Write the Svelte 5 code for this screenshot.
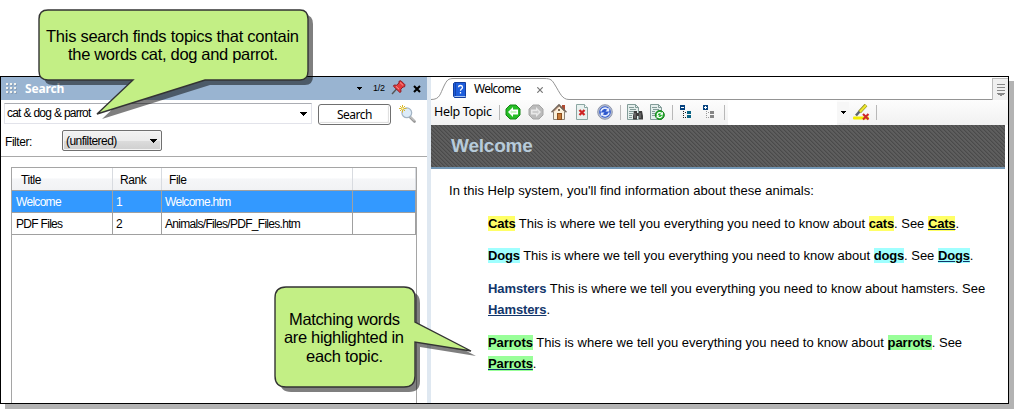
<script>
  const rows = [
    { title: 'Welcome', rank: 1, file: 'Welcome.htm', selected: true },
    { title: 'PDF Files', rank: 2, file: 'Animals/Files/PDF_Files.htm', selected: false }
  ];
  const dots = [0, 4, 8];
</script>

<div class="stage">
  <div class="window">
    <section class="search">
      <header class="titlebar">
        <svg class="grip" width="11" height="11" shape-rendering="crispEdges">
          {#each dots as y}{#each dots as x}
            <rect x={x + 1} y={y + 1} width="2" height="2" fill="#8aa1ba" />
            <rect {x} {y} width="2" height="2" fill="#f2f2ee" />
          {/each}{/each}
        </svg>
        <span class="name">Search</span>
        <svg class="down" width="6" height="3" shape-rendering="crispEdges"><path d="M0 0h6L3 3z" /></svg>
        <span class="count">1/2</span>
        <svg class="pin" width="15" height="15" viewBox="0 0 15 15">
          <path d="M1 14L6 8.5" stroke="#555" stroke-width="1.4" />
          <path d="M8 1.2L10 .8l4 4-.4 2-1.6.2-2.2 2.2.2 2.6-1.2.6L2.4 6.2l.8-1.2 2.4.2L8 3z" fill="#e23a3d" stroke="#8f1d25" />
          <path d="M9 2.5l3.2 3M5 6.4l3 2.8" stroke="#ff9a95" />
        </svg>
        <svg class="close" width="8" height="8"><path d="M1 1l6 6M7 1L1 7" stroke="#000" stroke-width="2.1" /></svg>
      </header>

      <div class="query">
        <div class="combo">
          <span>cat &amp; dog &amp; parrot</span>
          <svg width="7" height="4" shape-rendering="crispEdges"><path d="M0 0h7L3.5 4z" /></svg>
        </div>
        <button class="go"><span>Search</span></button>
        <svg class="lens" width="17" height="18" viewBox="0 0 17 18">
          <path d="M10.5 11.5l5 5" stroke="#999" stroke-width="2.6" stroke-linecap="round" />
          <path d="M11 11.5l4.3 4.3" stroke="#ddd" stroke-width="1" />
          <circle cx="7.8" cy="7.8" r="4.9" fill="#dcebf8" stroke="#a3b4c4" stroke-width="1.2" />
          <path d="M3.5 0v7.500M0 3.500h7.500M1 1l5 5M6 1L1 6" stroke="#d9b72c" />
          <rect x="2.500" y="2.500" width="2" height="2" fill="#fff9c0" />
        </svg>
      </div>

      <div class="filter">
        <label for="filter">Filter:</label>
        <button id="filter" class="select">
          <span>(unfiltered)</span>
          <svg width="7" height="4" shape-rendering="crispEdges"><path d="M0 0h7L3.5 4z" /></svg>
        </button>
      </div>

      <div class="results">
        <div class="grid head">
          <span>Title</span><span>Rank</span><span>File</span><span></span>
        </div>
        {#each rows as row}
          <div class="grid row" class:selected={row.selected}>
            <span>{row.title}</span><span>{row.rank}</span><span>{row.file}</span><span></span>
          </div>
        {/each}
      </div>
    </section>

    <div class="splitter"></div>

    <section class="topic">
      <div class="tabs">
        <div class="tabarea">
          <svg class="tabshape" width="574" height="23" viewBox="0 0 574 23" fill="none">
            <path d="M0 22.500C9 22.500 9 17 13 9C16 3 17 1.500 23 1.500H113C120 1.500 121 3 124 8C129 16 131 22.500 138 22.500H574" stroke="#949494" />
          </svg>
          <div class="tab">
            <svg width="13" height="16" viewBox="0 0 13 16">
              <path d="M1.500.5h11v15h-11L.5 14V1.500z" fill="#1e5edc" stroke="#123c9c" />
              <path d="M2.500 1v14" stroke="#1644ad" />
              <path d="M1.500 14.500h11" stroke="#a9c6f4" />
              <path d="M5.500 5.200Q5.600 3.500 7.500 3.500T9.500 5.200Q9.500 6.400 8.200 7.200Q7.500 7.800 7.500 8.800M7.500 10v1.500" fill="none" stroke="#fff" stroke-width="1.300" />
            </svg>
            <span>Welcome</span>
            <svg class="x" width="6" height="6"><path d="M.3.3l5.400 5.400M5.700.3L.3 5.700" stroke="#777" stroke-width="1.200" /></svg>
          </div>
        </div>
        <div class="menu">
          <svg width="8" height="12" shape-rendering="crispEdges"><path d="M0 0h8v1H0zM0 3h8v1H0zM0 6h8v1H0zM0 9h8v1H7v1H5v1H3v-1H1v-1H0z" fill="#888" /></svg>
        </div>
      </div>

      <div class="toolbar">
        <span class="label">Help Topic</span>
        <i class="sep"></i>
        <div class="tools nav">
          <svg width="16" height="16" viewBox="0 0 16 16">
            <path d="M5 1h6l4 4v6l-4 4H5l-4-4V5z" fill="#25bd25" stroke="#168616" />
            <path d="M8 3L3 8l5 5v-2.500h5v-5H8z" fill="#fff" />
            <path d="M7 6L5 8l2 2V9h4.500V7H7z" fill="#c8f3c3" />
          </svg>
          <svg width="16" height="16" viewBox="0 0 16 16">
            <path d="M5 1h6l4 4v6l-4 4H5l-4-4V5z" fill="#bbb" stroke="#a4a4a4" />
            <path d="M8 3l5 5-5 5v-2.500H3v-5h5z" fill="#e8e8e8" />
            <path d="M9 6l2 2-2 2V9H4.500V7H9z" fill="#ccc" />
          </svg>
          <svg width="16" height="16" viewBox="0 0 16 16">
            <path d="M11 1h3v5h-3z" fill="#b04a32" />
            <path d="M2.500 7.500L8 2l5.500 5.500v8h-11z" fill="#fbf0da" stroke="#8b8174" />
            <path d="M.5 8.200L8 .8l7.500 7.400" fill="none" stroke="#75675b" stroke-width="1.500" />
            <path d="M8 2.500L3 7.500" stroke="#d7a58a" />
            <rect x="6.500" y="9.500" width="4" height="6" fill="#c77a37" stroke="#8b4e1c" />
            <rect x="7" y="5" width="2" height="2" fill="#806b58" />
          </svg>
          <svg width="16" height="16" viewBox="0 0 16 16">
            <path d="M2.500.5h8l3 3v12h-11z" fill="#e8f1ef" stroke="#8ba6a2" />
            <path d="M10.500.5v3h3" fill="#fff" stroke="#8ba6a2" />
            <path d="M5.500 6l5 5M10.500 6l-5 5" stroke="#cf2525" stroke-width="2.300" />
          </svg>
          <svg width="16" height="16" viewBox="0 0 16 16">
            <circle cx="8" cy="8" r="7.300" fill="#b6bfd4" stroke="#8e96aa" />
            <circle cx="8" cy="8" r="5.800" fill="#2e58cd" />
            <path d="M4 7.500C4.500 4 9 3 11 5.500M12 8.500C11.500 12 7 13 5 10.500" fill="none" stroke="#e5edff" stroke-width="1.600" />
            <path d="M12.300 3.500v4H8.500zM3.700 12.500v-4h3.800z" fill="#e5edff" />
          </svg>
        </div>
        <i class="sep"></i>
        <div class="tools docs">
          <svg width="16" height="16" viewBox="0 0 16 16">
            <path d="M.5.5h8l3 3v12H.5z" fill="#e4eeec" stroke="#829c98" />
            <path d="M8.500.5v3h3M2 3.500h5M3 5.500h6M2 7.500h5M2 9.500h4M2 11.500h3M2 13.500h3" fill="none" stroke="#829c98" />
            <path d="M7 7h3v2h2V7h3l1 5v3.500h-4V12h-2v3.500H6V12z" fill="#3f3f3f" />
            <path d="M8 9v5M13 9v5" stroke="#888" />
          </svg>
          <svg width="16" height="16" viewBox="0 0 16 16">
            <path d="M.5.5h8l3 3v12H.5z" fill="#e4eeec" stroke="#829c98" />
            <path d="M8.500.5v3h3M2 3.500h5M3 5.500h6M2 7.500h3M2 9.500h3M2 11.500h3" fill="none" stroke="#829c98" />
            <circle cx="9.800" cy="11" r="4.500" fill="#23ad2c" stroke="#148019" />
            <path d="M7.300 11c0-3 4-3.200 5-.8M12.300 11.500c-.5 2.500-4 2.800-5 .5" fill="none" stroke="#fff" stroke-width="1.200" />
            <path d="M12.900 7.800v3h-3zM6.700 14.200v-3h3z" fill="#fff" />
          </svg>
        </div>
        <i class="sep"></i>
        <div class="tools trees">
          <svg width="16" height="16" shape-rendering="crispEdges">
            <path d="M2 1h5v5H2z" fill="#06427f" /><path d="M3 3h3v1H3z" fill="#fff" />
            <path d="M5 7h1v1H5zM5 9h1v1H5zM5 11h1v1H5zM5 13h1v1H5zM7 8h1v1H7zM7 13h1v1H7z" fill="#222" />
            <path d="M9 7h4v3H9zM9 11h4v3H9z" fill="#0a6484" />
          </svg>
          <svg width="16" height="16" shape-rendering="crispEdges">
            <path d="M2 1h5v5H2z" fill="#06427f" /><path d="M3 3h3v1H3zM4 2h1v3H4z" fill="#fff" />
            <path d="M5 7h1v1H5zM5 9h1v1H5zM5 11h1v1H5zM5 13h1v1H5zM7 8h1v1H7zM7 13h1v1H7z" fill="#999" />
            <path d="M9 7h4v3H9zM9 11h4v3H9z" fill="#858585" />
          </svg>
        </div>
        <i class="sep"></i>
        <div class="quick"></div>
        <div class="drop"><svg width="5" height="3" shape-rendering="crispEdges"><path d="M0 0h5L2.500 3z" /></svg></div>
        <svg class="marker" width="17" height="17" viewBox="0 0 17 17">
          <rect y="12.500" width="16" height="3" rx="1" fill="#f4ee00" />
          <path d="M13 1L6.500 8" stroke="#8e8c24" stroke-width="3.600" />
          <path d="M13 1.200L6.500 8.200" stroke="#eee72d" stroke-width="2.200" />
          <path d="M6.500 7.500L3 11.500" stroke="#5d6570" stroke-width="2.600" />
          <path d="M10 10l5.500 5.500M15.500 10L10 15.500" stroke="#cf2929" stroke-width="2.100" />
        </svg>
        <i class="sep"></i>
      </div>

      <div class="banner"><h1>Welcome</h1></div>

      <article>
        <p class="intro">In this Help system, you'll find information about these animals:</p>
        <p class="l1"><b class="cat">Cats</b> This is where we tell you everything you need to know about <b class="cat">cats</b>. See <b class="cat link">Cats</b>.</p>
        <p class="l2"><b class="dog">Dogs</b> This is where we tell you everything you need to know about <b class="dog">dogs</b>. See <b class="dog link">Dogs</b>.</p>
        <p class="l3"><b class="ham">Hamsters</b> This is where we tell you everything you need to know about hamsters. See<br /><b class="ham link">Hamsters</b>.</p>
        <p class="l4"><b class="bird">Parrots</b> This is where we tell you everything you need to know about <b class="bird">parrots</b>. See<br /><b class="bird link">Parrots</b>.</p>
      </article>
    </section>
  </div>

  <svg class="callouts" width="1014" height="409" viewBox="0 0 1014 409">
    <g class="shade" transform="translate(5 5)">
      <path d="M48 10H300Q308 10 308 19V71Q308 80 300 80H205L97 114L133 80H48Q39 80 39 71V19Q39 10 48 10Z" />
      <path d="M286 287H404Q415 287 415 298V322L471 351L415 342V376Q415 387 404 387H286Q275 387 275 376V298Q275 287 286 287Z" />
    </g>
    <g class="bubble">
      <path d="M48 10H300Q308 10 308 19V71Q308 80 300 80H205L97 114L133 80H48Q39 80 39 71V19Q39 10 48 10Z" />
      <path d="M286 287H404Q415 287 415 298V322L471 351L415 342V376Q415 387 404 387H286Q275 387 275 376V298Q275 287 286 287Z" />
    </g>
    <g class="say">
      <text x="46" y="42" textLength="253">This search finds topics that contain</text>
      <text x="68" y="60" textLength="210">the words cat, dog and parrot.</text>
      <text x="289" y="325" textLength="111">Matching words</text>
      <text x="284" y="343" textLength="120">are highlighted in</text>
      <text x="306" y="362" textLength="77">each topic.</text>
    </g>
  </svg>
</div>

<style>
  :global(body) { background: #fff; overflow: hidden; }
  .stage { position: relative; width: 1014px; height: 409px; padding-top: 76px; box-sizing: border-box; font-family: "Liberation Sans", Arial, sans-serif; color: #000; background: #fff; overflow: hidden; }
  .stage * { box-sizing: border-box; }
  svg { flex: none; }
  span, p, h1, label { white-space: nowrap; }
  .window { width: 1009px; height: 328px; border: 1px solid #000; box-shadow: 5px 5px 0 #b3b3b3; display: flex; background: #fff; }

  .search { width: 426px; display: flex; flex-direction: column; }
  .titlebar { height: 23px; background: #99b4d1; display: flex; align-items: center; padding-left: 5px; }
  .name { margin-left: 8px; width: 332px; font: bold 12px "Noto Sans", sans-serif; letter-spacing: -.15px; color: #fff; line-height: 20px; }
  .down { margin: 0 1px 0 -1px; }
  .count { width: 12px; margin-left: 10px; font-size: 9px; letter-spacing: -.2px; line-height: 20px; margin-top: -2px; }
  .pin { margin: -3px 0 0 6px; }
  .close { margin-left: 7px; }

  .query { display: flex; height: 28px; padding: 3px 0 0 3px; align-items: flex-start; }
  .combo { width: 308px; height: 21px; border: 1px solid #e2e3ea; border-top-color: #abadb3; display: flex; align-items: center; justify-content: space-between; padding: 0 4px 0 2px; font-size: 12px; }
  .combo span { letter-spacing: -.8px; word-spacing: .3px; margin-top: -2px; }
  .go { margin: 1px 0 0 6px; padding: 0; width: 73px; height: 21px; border: 1px solid #707070; border-radius: 3px; background: #fff; box-shadow: inset 0 0 0 1px #fff, inset -1px -1px 1px 1px #ddd; font: 12px "Noto Sans", sans-serif; line-height: 19px; color: #000; }
  .go span { letter-spacing: -.5px; }
  .lens { margin: 2px 0 0 8px; }

  .filter { height: 29px; display: flex; border-bottom: 1px solid #a9a9a9; padding: 2px 0 0 4px; }
  .filter label { width: 57px; font-size: 12px; letter-spacing: -.45px; line-height: 24px; }
  .select { width: 100px; height: 21px; border: 1px solid #707070; border-radius: 2px; background: linear-gradient(#f2f2f2, #ebebeb 50%, #dcdcdc 51%, #cfcfcf); box-shadow: inset 0 0 0 1px #f5f5f5; padding: 0 4px 0 3px; font: 12px "Liberation Sans", sans-serif; color: #000; display: flex; align-items: center; justify-content: space-between; }
  .select span { letter-spacing: -.55px; }

  .results { margin: 10px 10px 0 10px; flex: 1; border: 1px solid #a5a5a5; border-bottom: 0; font-size: 12px; }
  .grid { display: grid; grid-template-columns: 101px 49px 191px 63px; grid-template-rows: 100%; height: 22px; border-bottom: 1px solid #a0a0a0; line-height: 22px; }
  .grid span { padding-left: 3px; border-right: 1px solid #a0a0a0; letter-spacing: -.7px; }
  .grid span:first-child { padding-left: 4px; }
  .grid.head { height: 23px; background: linear-gradient(#fff 45%, #f5f6f8 50%, #f1f2f4); line-height: 24px; }
  .grid.head span { border-color: #d8dbe0; padding-left: 7px; letter-spacing: -.45px; }
  .grid.head span:first-child { padding-left: 9px; }
  .row.selected { background: #3399ff; color: #fff; }

  .splitter { width: 4px; background: #dfe8f1; }
  .topic { width: 577px; display: flex; flex-direction: column; }
  .tabs { height: 23px; display: flex; }
  .tabarea { flex: 1; overflow: hidden; display: grid; }
  .tabshape, .tab { grid-area: 1 / 1; }
  .tab { display: flex; align-items: center; padding: 2px 0 0 22px; }
  .tab span { font: 12px "Noto Sans", sans-serif; margin-left: 8px; width: 63px; line-height: 18px; letter-spacing: -.75px; margin-top: -1px; }
  .menu { width: 16px; border: 1px solid #bbb; border-right: 0; border-bottom: 0; background: #f0f0f0; margin-top: 1px; display: grid; place-items: center; }

  .toolbar { height: 25px; display: flex; align-items: center; background: linear-gradient(#fdfdfd, #f1f1f1); padding-left: 3px; }
  .label { width: 65px; font: 12.500px "Noto Sans", sans-serif; line-height: 24px; letter-spacing: -.34px; margin-top: -1px; }
  .sep { width: 1px; height: 15px; background: #b8b8b8; flex: none; }
  .tools { display: flex; gap: 7px; margin-top: -1px; }
  .nav { margin-right: 7px; margin-left: 5px; }
  .docs { margin-right: 6px; margin-left: 6px; }
  .trees { margin-right: 7px; margin-left: 5px; }
  .quick { width: 109px; height: 25px; margin-left: 3px; background: #fff; }
  .drop { width: 12px; height: 21px; background: #f7f7f7; display: grid; place-items: center; }
  .marker { margin: -1px 6px 0 4px; }

  .banner { width: 574px; height: 44px; border-bottom: 2px solid #7296b4; background: repeating-linear-gradient(45deg, #5e5e5e 0 1px, #4a4a4a 1px 2px, #565656 2px 2.828px); padding-left: 20px; }
  h1 { margin: 0; font-size: 19px; line-height: 42px; color: #b7cbda; letter-spacing: -.2px; }
  article { padding: 11px 0 0 18px; font-size: 13px; line-height: 21px; }
  p { margin: 0; }
  article p { padding-left: 39px; margin-bottom: 12px; letter-spacing: 0; }
  article p.intro { padding: 0; letter-spacing: .04px; }
  article p.l1 { margin-bottom: 11px; letter-spacing: -.01px; }
  article p.l3, article p.l4 { letter-spacing: .015px; }
  b { line-height: 16px; letter-spacing: -.18px; }
  .ham, .l4 b { letter-spacing: -.1px; }
  .cat { background: #ffff66; }
  .dog { background: #a0ffff; }
  .bird { background: #99ff99; }
  .ham { color: #12366b; }
  .link { text-decoration: underline; text-decoration-color: #12366b; }

  .callouts { position: absolute; left: 0; top: 0; }
  .shade { fill: #000; opacity: .5; }
  .bubble { fill: #c3ef85; stroke: #333; stroke-width: 1.400; }
  .say { font-size: 16.500px; }
</style>
